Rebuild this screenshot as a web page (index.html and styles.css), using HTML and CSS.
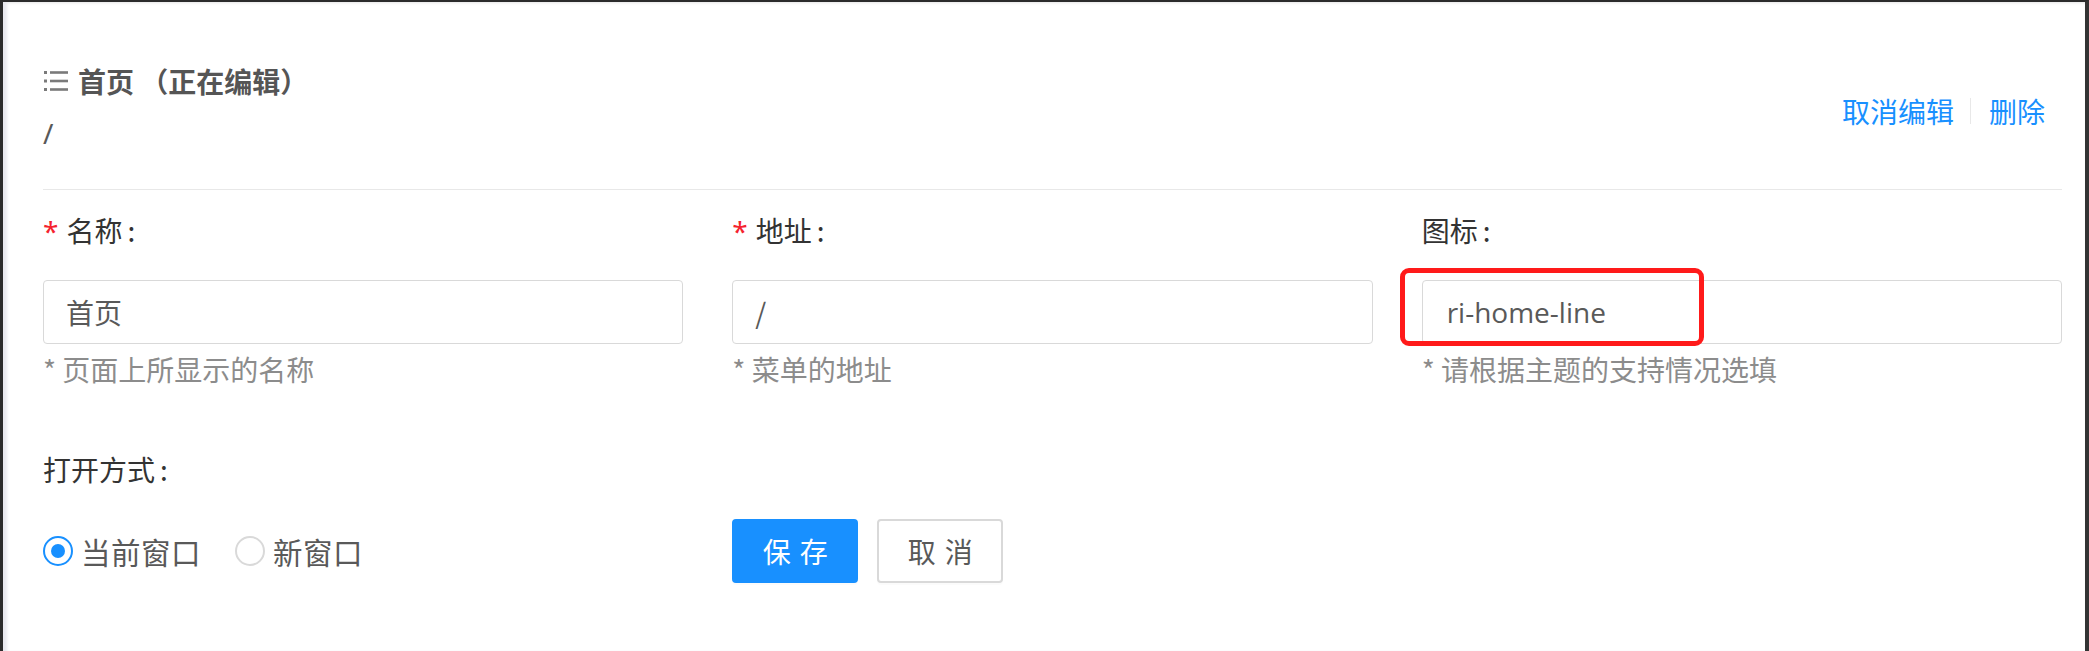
FILE: index.html
```html
<!DOCTYPE html>
<html lang="zh-CN">
<head>
<meta charset="utf-8">
<title>菜单编辑</title>
<link rel="stylesheet" href="styles.css">
</head>
<body>
<div class="frame">
  <div class="panel">
    <div class="header">
      <div class="header-main">
        <div class="title">
          <svg class="title-icon" viewBox="0 0 24 22" width="24" height="22" aria-hidden="true">
            <rect x="0" y="1" width="3" height="3" fill="#7a7a7a"/>
            <rect x="6" y="1.2" width="18" height="2.6" fill="#7a7a7a"/>
            <rect x="0" y="9.5" width="3" height="3" fill="#7a7a7a"/>
            <rect x="6" y="9.7" width="18" height="2.6" fill="#7a7a7a"/>
            <rect x="0" y="18" width="3" height="3" fill="#7a7a7a"/>
            <rect x="6" y="18.2" width="18" height="2.6" fill="#7a7a7a"/>
          </svg>
          <span>首页 （正在编辑）</span>
        </div>
        <div class="path">/</div>
      </div>
      <div class="actions">
        <a class="link">取消编辑</a>
        <span class="vsep"></span>
        <a class="link">删除</a>
      </div>
    </div>
    <div class="divider"></div>
    <div class="grid">
      <div class="field">
        <div class="label"><span class="req">*</span>名称<span class="colon">:</span></div>
        <div class="input">首页</div>
        <div class="help">* 页面上所显示的名称</div>
      </div>
      <div class="field">
        <div class="label"><span class="req">*</span>地址<span class="colon">:</span></div>
        <div class="input">/</div>
        <div class="help">* 菜单的地址</div>
      </div>
      <div class="field">
        <div class="label">图标<span class="colon">:</span></div>
        <div class="input-wrap">
          <div class="input latin">ri-home-line</div>
          <div class="highlight"></div>
        </div>
        <div class="help">* 请根据主题的支持情况选填</div>
      </div>
    </div>
    <div class="grid grid-bottom">
      <div class="field">
        <div class="label">打开方式<span class="colon">:</span></div>
        <div class="radios">
          <label class="radio"><span class="circle checked"></span><span class="radio-text">当前窗口</span></label>
          <label class="radio"><span class="circle"></span><span class="radio-text">新窗口</span></label>
        </div>
      </div>
      <div class="buttons">
        <button class="btn primary">保存</button>
        <button class="btn">取消</button>
      </div>
    </div>
  </div>
</div>
</body>
</html>
```
FILE: styles.css
```css
html, body {
  margin: 0;
  padding: 0;
  background: #ffffff;
}
body {
  font-family: "Noto Sans", "Noto Sans CJK SC", sans-serif;
  font-size: 28px;
}
.frame {
  box-sizing: border-box;
  width: 2089px;
  height: 651px;
  border-top: 2px solid #2b2b2b;
  border-left: 3px solid #2b2b2b;
  border-right: 4px solid #333333;
  background: #ffffff;
  box-shadow: inset 5px 0 3px -1px #e9e9ef, inset 0 3px 3px -2px #e6e6e6;
}
.panel {
  padding: 59px 20px 0 40px;
}
.header {
  display: flex;
  justify-content: space-between;
  align-items: center;
}
.header-main {
  display: flex;
  flex-direction: column;
  gap: 12px;
}
.title {
  display: flex;
  align-items: center;
  height: 40px;
  font-weight: 700;
  color: #555555;
  font-family: "Noto Sans CJK SC", sans-serif;
}
.title-icon {
  margin-left: 1px;
  margin-right: 10px;
}
.path {
  height: 40px;
  line-height: 40px;
  color: #595959;
}
.actions {
  display: flex;
  align-items: center;
  margin-top: 8px;
  padding-right: 20px;
}
.link {
  color: #1890ff;
  font-family: "Noto Sans CJK SC", sans-serif;
  cursor: pointer;
}
.vsep {
  display: inline-block;
  width: 1px;
  height: 26px;
  background: #e8e8e8;
  margin: 0 18px 0 16px;
}
.divider {
  height: 1px;
  background: #e8e8e8;
  margin: 36px 3px 0 0;
}
.grid {
  display: grid;
  grid-template-columns: repeat(3, 1fr);
  column-gap: 49px;
  margin-right: 3px;
  padding-top: 20px;
}
.field {
  display: flex;
  flex-direction: column;
}
.label {
  height: 40px;
  line-height: 40px;
  color: #333333;
  font-family: "Noto Sans CJK SC", sans-serif;
}
.colon {
  margin-left: 5px;
}
.req {
  color: #f5222d;
  margin-right: 8px;
  font-family: "Noto Sans", sans-serif;
}
.input-wrap {
  position: relative;
  margin-top: 30px;
}
.field > .input {
  margin-top: 30px;
}
.input {
  box-sizing: border-box;
  height: 64px;
  line-height: 62px;
  border: 1px solid #d9d9d9;
  border-radius: 4px;
  padding: 0 22px;
  color: #595959;
  font-family: "Noto Sans CJK SC", sans-serif;
}
.input.latin {
  font-family: "Open Sans", "Noto Sans CJK SC", sans-serif;
  padding-left: 24px;
}
.highlight {
  position: absolute;
  left: -22px;
  top: -12px;
  width: 304px;
  height: 78px;
  box-sizing: border-box;
  border: 5px solid #ff1a1a;
  border-radius: 9px;
}
.help {
  margin-top: 5px;
  height: 40px;
  line-height: 40px;
  color: #8c8c8c;
  font-family: "Noto Sans CJK SC", sans-serif;
}
.grid-bottom {
  padding-top: 60px;
}
.radios {
  display: flex;
  align-items: center;
  margin-top: 30px;
  height: 64px;
}
.radio {
  display: flex;
  align-items: center;
  margin-right: 16px;
}
.circle {
  box-sizing: border-box;
  width: 30px;
  height: 30px;
  border-radius: 50%;
  border: 2px solid #d9d9d9;
  background: #ffffff;
  position: relative;
}
.circle.checked {
  border-color: #1890ff;
}
.circle.checked::after {
  content: "";
  position: absolute;
  left: 6px;
  top: 6px;
  width: 14px;
  height: 14px;
  border-radius: 50%;
  background: #1890ff;
}
.radio-text {
  padding: 0 18px 0 8px;
  color: #595959;
  font-size: 29.5px;
  letter-spacing: 0.5px;
  font-family: "Noto Sans CJK SC", sans-serif;
}
.buttons {
  display: flex;
  align-items: flex-end;
  gap: 19px;
}
.btn {
  box-sizing: border-box;
  height: 64px;
  width: 126px;
  border: 2px solid #d9d9d9;
  border-radius: 4px;
  background: #ffffff;
  color: #595959;
  font-family: "Noto Sans CJK SC", sans-serif;
  font-size: 28px;
  letter-spacing: 9px;
  padding: 0 0 0 9px;
  box-shadow: 0 2px 0 rgba(0,0,0,0.015);
}
.btn.primary {
  background: #1890ff;
  border-color: #1890ff;
  color: #ffffff;
}
```
